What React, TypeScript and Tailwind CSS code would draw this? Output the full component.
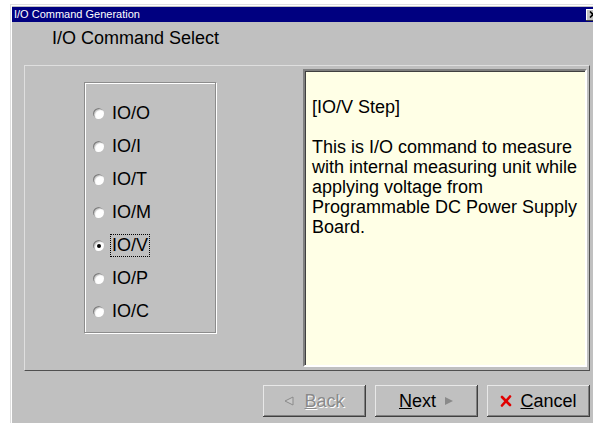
import { useState } from "react";

const commands = ["IO/O", "IO/I", "IO/T", "IO/M", "IO/V", "IO/P", "IO/C"];

function Radio({ checked }: { checked: boolean }) {
  return (
    <span className="flex h-[11px] w-[11px] shrink-0 items-center justify-center rounded-full bg-white shadow-[inset_1px_1px_0_#808080,inset_2px_2px_1px_#c8c8c8]">
      {checked && <span className="h-[4px] w-[4px] rounded-full bg-black" />}
    </span>
  );
}

function WizardButton({ children, disabled }: { children: React.ReactNode; disabled?: boolean }) {
  return (
    <button
      className={`flex h-[32px] w-[103px] items-center justify-center gap-[8px] bg-[#c0c0c0] text-[18px] leading-[21px] shadow-[inset_-1px_-1px_0_#404040,inset_1px_1px_0_#e8e8e8,inset_-2px_-2px_0_#808080] ${
        disabled ? "text-[#8a8a8a] [text-shadow:1px_1px_0_#ffffff]" : "text-black"
      }`}
    >
      {children}
    </button>
  );
}

export default function App() {
  const [selected, setSelected] = useState("IO/V");

  return (
    <div className="h-[423px] w-[593px] overflow-hidden bg-white font-['Liberation_Sans',Arial,sans-serif]">
      {/* dialog window */}
      <div className="ml-[10px] mt-[4px] h-[419px] w-[600px] border-l border-t border-[#dfdfdf] bg-[#c0c0c0]">
        <div className="flex h-full flex-col border-l border-t border-white pt-[1px]">
          {/* title bar */}
          <div className="flex h-[15px] items-center bg-[#000080] pl-[2px]">
            <span className="flex-1 text-[11px] leading-[13px] text-white">I/O Command Generation</span>
            <span className="mr-[10px] flex h-[12px] w-[14px] items-center justify-center bg-[#c0c0c0] shadow-[inset_-1px_-1px_0_#404040,inset_1px_1px_0_#ffffff]">
              <svg width="8" height="7" viewBox="0 0 8 7">
                <path d="M1 0.5 L7 6.5 M7 0.5 L1 6.5" stroke="#000" strokeWidth="1.6" />
              </svg>
            </span>
          </div>

          <h1 className="mt-[6px] pl-[40px] text-[18px] leading-[21px] text-black">I/O Command Select</h1>

          {/* content panel */}
          <div className="ml-[12px] mt-[16px] flex h-[306px] w-[566px] border-b border-l border-r border-t border-b-[#505050] border-l-[#dfdfdf] border-r-[#505050] border-t-[#dfdfdf]">
            <div className="ml-[59px] mt-[16px] flex h-[251px] w-[132px] flex-col gap-[10px] border border-[#8c8c8c] pl-[8px] pt-[19px] shadow-[inset_1px_1px_0_#ffffff,1px_1px_0_#ffffff]">
              {commands.map((cmd) => (
                <div key={cmd} className="flex items-center gap-[6px]" onClick={() => setSelected(cmd)}>
                  <Radio checked={selected === cmd} />
                  <span
                    className={`border px-[1px] text-[18px] leading-[21px] text-black ${
                      selected === cmd ? "border-dotted border-black" : "border-transparent"
                    }`}
                  >
                    {cmd}
                  </span>
                </div>
              ))}
            </div>

            {/* description */}
            <div className="ml-[87px] mr-[2px] mt-[3px] h-[298px] w-[284px] border-2 border-b-white border-l-[#808080] border-r-white border-t-[#808080] bg-[#ffffe6] pl-[7px] pt-[26px] shadow-[inset_1px_1px_0_#404040]">
              <div className="whitespace-nowrap text-[18px] leading-[20px] text-black">
                <div>[IO/V Step]</div>
                <div>&nbsp;</div>
                <div>This is I/O command to measure</div>
                <div>with internal measuring unit while</div>
                <div>applying voltage from</div>
                <div>Programmable DC Power Supply</div>
                <div>Board.</div>
              </div>
            </div>
          </div>

          {/* wizard buttons */}
          <div className="ml-[12px] mt-[14px] flex w-[566px] justify-end gap-[9px]">
            <WizardButton disabled>
              <svg width="10" height="10" viewBox="0 0 10 10" className="mr-[2px]">
                <path d="M9 1 L1 5 L9 9 Z" fill="#c8c8c8" stroke="#8a8a8a" strokeWidth="1" />
              </svg>
              <span>
                <span className="underline">B</span>ack
              </span>
            </WizardButton>
            <WizardButton>
              <span>
                <span className="underline">N</span>ext
              </span>
              <svg width="10" height="10" viewBox="0 0 10 10">
                <path d="M1 1 L9 5 L1 9 Z" fill="#8a8a8a" />
              </svg>
            </WizardButton>
            <WizardButton>
              <svg width="12" height="12" viewBox="0 0 12 12">
                <path d="M2 2 L10 10 M10 1.5 L2 10.5" stroke="#e00000" strokeWidth="2.6" strokeLinecap="round" />
              </svg>
              <span>
                <span className="underline">C</span>ancel
              </span>
            </WizardButton>
          </div>
        </div>
      </div>
    </div>
  );
}
